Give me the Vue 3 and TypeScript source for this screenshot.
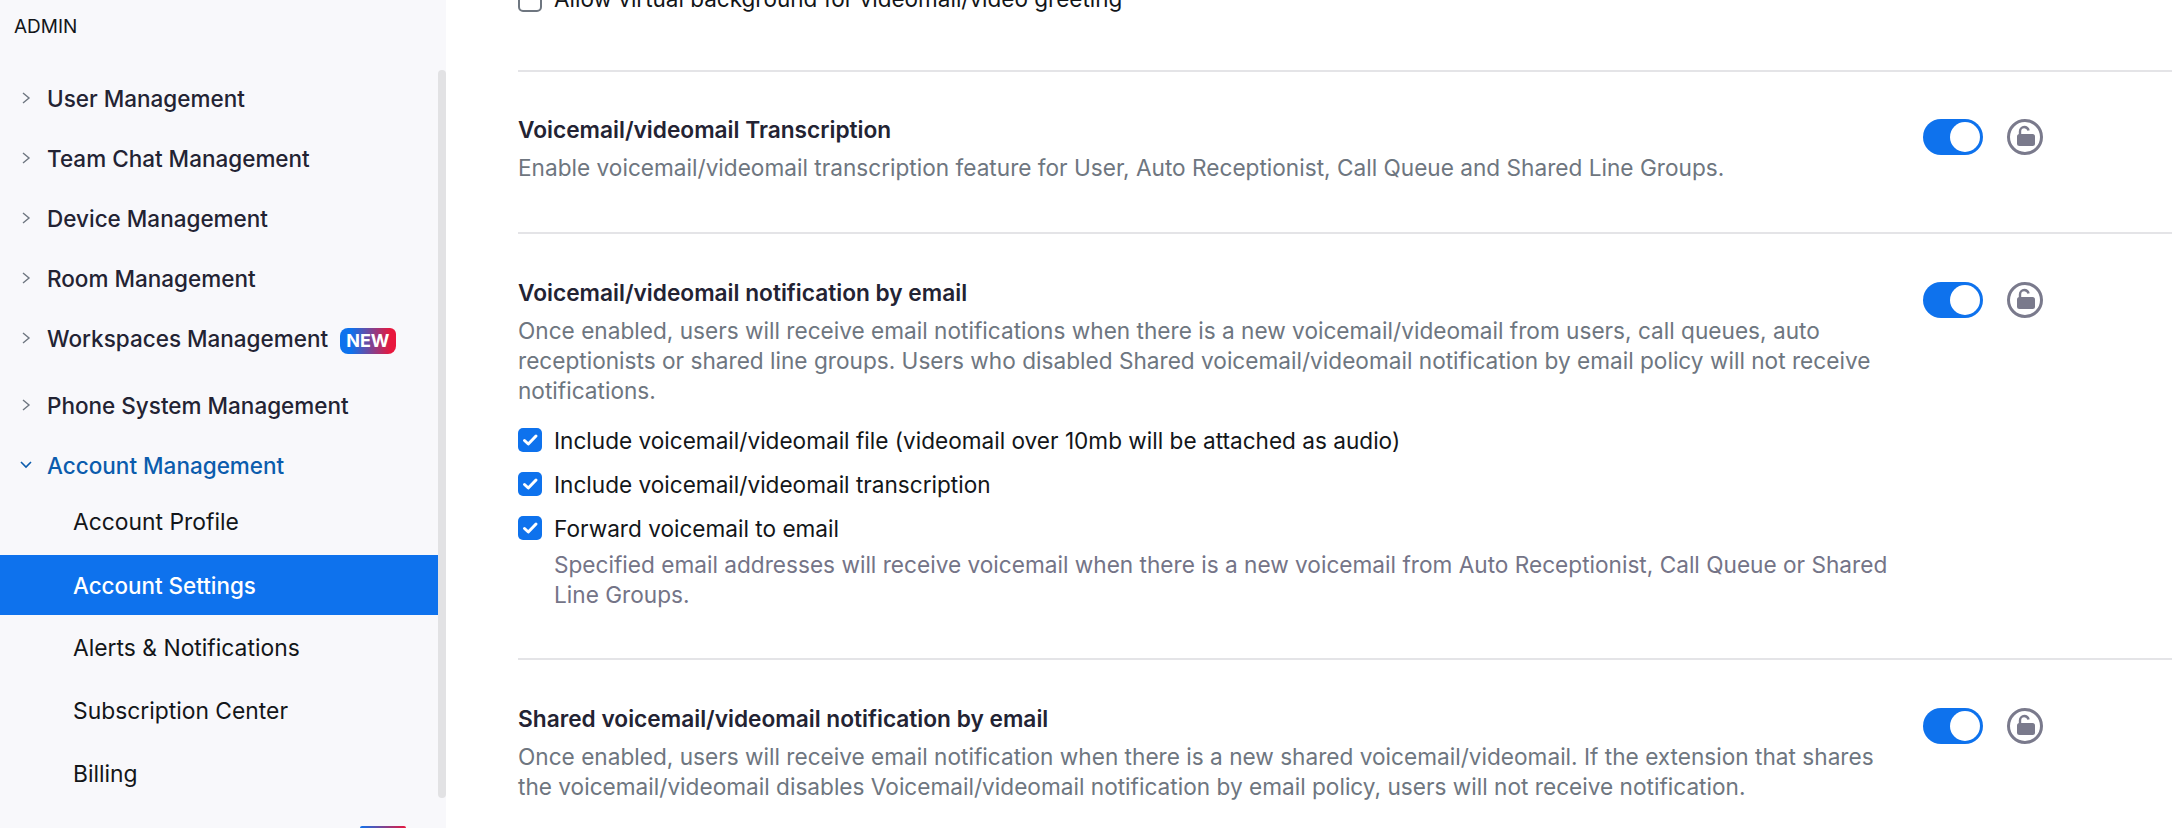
<script setup lang="ts">
interface NavItem {
  label: string;
  badge?: boolean;
}

const navItems: NavItem[] = [
  { label: 'User Management' },
  { label: 'Team Chat Management' },
  { label: 'Device Management' },
  { label: 'Room Management' },
  { label: 'Workspaces Management', badge: true },
  { label: 'Phone System Management' },
];

const subItems = ['Account Profile', 'Account Settings', 'Alerts & Notifications', 'Subscription Center', 'Billing'];

const options = [
  'Include voicemail/videomail file (videomail over 10mb will be attached as audio)',
  'Include voicemail/videomail transcription',
  'Forward voicemail to email',
];
</script>

<template>
  <div class="page">
    <aside class="sidebar">
      <div class="admin">ADMIN</div>
      <nav class="nav">
        <div v-for="item in navItems" :key="item.label" class="nav-row" :class="{ tall: item.badge }">
          <svg class="chev" width="12" height="16" viewBox="0 0 12 16"><path d="M3 3l6 5-6 5" fill="none" stroke="#6e7680" stroke-width="1.4" /></svg>
          <span>{{ item.label }}</span>
          <span v-if="item.badge" class="badge">NEW</span>
        </div>
        <div class="nav-row open">
          <svg class="chev" width="12" height="16" viewBox="0 0 12 16"><path d="M1 5l5 5 5-5" fill="none" stroke="#0b5cad" stroke-width="1.6" /></svg>
          <span>Account Management</span>
        </div>
        <div class="subs">
          <div v-for="sub in subItems" :key="sub" class="sub-row" :class="{ active: sub === 'Account Settings' }">{{ sub }}</div>
        </div>
      </nav>
      <div class="scrollbar"></div>
      <div class="peek"></div>
    </aside>

    <main class="main">
      <div class="clipped-row">
        <span class="box"></span>
        <span class="clipped-label">Allow virtual background for videomail/video greeting</span>
      </div>

      <section class="setting first">
        <div class="body">
          <h3>Voicemail/videomail Transcription</h3>
          <p class="desc">Enable voicemail/videomail transcription feature for User, Auto Receptionist, Call Queue and Shared Line Groups.</p>
        </div>
        <div class="controls">
          <span class="toggle"><span class="knob"></span></span>
          <span class="lock">
            <svg width="24" height="24" viewBox="0 0 24 24"><path d="M7 10V6.5C7 3.8 9 2 11.2 2c2.2 0 3.9 1.4 4.4 3.6" fill="none" stroke="#7a7a8c" stroke-width="2.4" /><rect x="4" y="9" width="18" height="12" rx="2.5" fill="#7a7a8c" /></svg>
          </span>
        </div>
      </section>

      <section class="setting second">
        <div class="body">
          <h3>Voicemail/videomail notification by email</h3>
          <p class="desc">Once enabled, users will receive email notifications when there is a new voicemail/videomail from users, call queues, auto receptionists or shared line groups. Users who disabled Shared voicemail/videomail notification by email policy will not receive notifications.</p>
          <div class="options">
            <label v-for="opt in options" :key="opt" class="option">
              <span class="box checked">
                <svg width="24" height="24" viewBox="0 0 24 24"><path d="M6.5 12.5l3.8 3.5L18 8" fill="none" stroke="#fff" stroke-width="3" stroke-linecap="round" stroke-linejoin="round" /></svg>
              </span>
              <span>{{ opt }}</span>
            </label>
            <p class="desc note">Specified email addresses will receive voicemail when there is a new voicemail from Auto Receptionist, Call Queue or Shared Line Groups.</p>
          </div>
        </div>
        <div class="controls">
          <span class="toggle"><span class="knob"></span></span>
          <span class="lock">
            <svg width="24" height="24" viewBox="0 0 24 24"><path d="M7 10V6.5C7 3.8 9 2 11.2 2c2.2 0 3.9 1.4 4.4 3.6" fill="none" stroke="#7a7a8c" stroke-width="2.4" /><rect x="4" y="9" width="18" height="12" rx="2.5" fill="#7a7a8c" /></svg>
          </span>
        </div>
      </section>

      <section class="setting third">
        <div class="body">
          <h3>Shared voicemail/videomail notification by email</h3>
          <p class="desc">Once enabled, users will receive email notification when there is a new shared voicemail/videomail. If the extension that shares the voicemail/videomail disables Voicemail/videomail notification by email policy, users will not receive notification.</p>
        </div>
        <div class="controls">
          <span class="toggle"><span class="knob"></span></span>
          <span class="lock">
            <svg width="24" height="24" viewBox="0 0 24 24"><path d="M7 10V6.5C7 3.8 9 2 11.2 2c2.2 0 3.9 1.4 4.4 3.6" fill="none" stroke="#7a7a8c" stroke-width="2.4" /><rect x="4" y="9" width="18" height="12" rx="2.5" fill="#7a7a8c" /></svg>
          </span>
        </div>
      </section>
    </main>
  </div>
</template>

<style>
html,
body {
  margin: 0;
  overflow: hidden;
  background: #fff;
}
</style>

<style scoped>
.page {
  display: flex;
  width: 2172px;
  height: 828px;
  overflow: hidden;
  font-family: Inter, 'Liberation Sans', sans-serif;
  color: #232333;
}

.sidebar {
  position: relative;
  flex: none;
  width: 446px;
  height: 828px;
  background: #f8f8fb;
}

.admin {
  height: 68px;
  padding: 17px 0 0 14px;
  box-sizing: border-box;
  font-size: 19px;
  line-height: 20px;
  color: #131619;
}

.nav {
  width: 438px;
}

.nav-row {
  display: flex;
  align-items: center;
  height: 60px;
  padding-left: 20px;
  font-size: 22.5px;
  font-weight: 500;
}

.nav-row.tall {
  height: 67px;
  padding-bottom: 7px;
  box-sizing: border-box;
}

.nav-row.open {
  color: #0b5cad;
  height: 60px;
}

.chev {
  flex: none;
  margin-right: 15px;
}

.badge {
  margin: 5px 0 0 12px;
  padding: 0 6px;
  height: 26px;
  line-height: 26px;
  border-radius: 8px 6px 8px 8px;
  font-size: 18px;
  font-weight: 700;
  color: #fff;
  background: linear-gradient(90deg, #0e72ed 20%, #e8173d 90%);
}

.subs {
  margin-top: -3px;
}

.sub-row {
  display: flex;
  align-items: center;
  height: 60px;
  margin-bottom: 3px;
  padding-left: 73px;
  font-size: 22.85px;
  color: #131619;
}

.sub-row.active {
  color: #fff;
  font-size: 22.4px;
  font-weight: 500;
  background: #0e72ed;
}

.scrollbar {
  position: absolute;
  top: 70px;
  right: 0;
  width: 8px;
  height: 728px;
  border-radius: 4px;
  background: #e2e2e4;
}

.peek {
  position: absolute;
  left: 360px;
  bottom: 0;
  width: 46px;
  height: 2px;
  border-radius: 4px 4px 0 0;
  background: linear-gradient(90deg, #0e72ed, #e8173d);
}

.main {
  flex: 1;
  min-width: 0;
  padding-left: 72px;
  margin-top: -16px;
}

.clipped-row {
  display: flex;
  align-items: center;
  height: 32px;
  margin-bottom: 54px;
  font-size: 22.5px;
  color: #131619;
}

.clipped-row .box {
  margin-right: 12px;
  background: #fff;
  border: 2px solid #6e7680;
  box-sizing: border-box;
}

.clipped-label {
  margin-top: -4px;
}

.setting {
  display: flex;
  justify-content: space-between;
  box-sizing: border-box;
  border-top: 2px solid #e4e4e7;
  padding-top: 44px;
}

.setting.first {
  height: 162px;
}

.setting.second {
  height: 426px;
  padding-top: 45px;
}

.setting.third {
  padding-top: 45px;
}

.body {
  width: 1380px;
}

h3 {
  margin: 0;
  font-size: 22.7px;
  line-height: 28px;
  font-weight: 600;
  color: #232333;
}

.desc {
  margin: 9px 0 0;
  font-size: 22.63px;
  line-height: 30px;
  color: #6e7680;
}

.options {
  margin-top: 12px;
}

.option {
  display: flex;
  align-items: center;
  gap: 12px;
  height: 44px;
  font-size: 22.6px;
  color: #131619;
}

.box {
  flex: none;
  display: inline-flex;
  align-items: center;
  justify-content: center;
  width: 24px;
  height: 24px;
  border-radius: 5px;
}

.box.checked {
  background: #0e72ed;
}

.note {
  margin: 0 0 0 36px;
  color: #747487;
}

.controls {
  display: flex;
  align-items: center;
  gap: 24px;
  height: 36px;
  margin-top: 3px;
  margin-right: 129px;
}

.toggle {
  display: flex;
  justify-content: flex-end;
  align-items: center;
  width: 60px;
  height: 36px;
  padding-right: 3px;
  box-sizing: border-box;
  border-radius: 18px;
  background: #0e72ed;
}

.knob {
  width: 30px;
  height: 30px;
  border-radius: 50%;
  background: #fff;
}

.lock {
  display: flex;
  align-items: center;
  justify-content: center;
  width: 36px;
  height: 36px;
  box-sizing: border-box;
  border: 3.5px solid #7a7a8c;
  border-radius: 50%;
}
</style>
